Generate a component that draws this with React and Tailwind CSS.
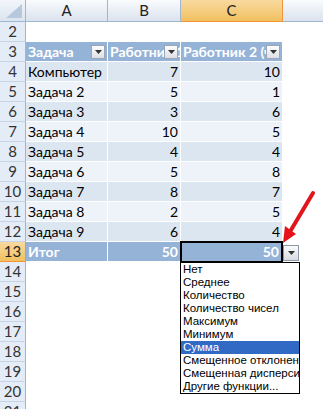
import React from "react";

const data = [
  ["Компьютер", 7, 10],
  ["Задача 2", 5, 1],
  ["Задача 3", 3, 6],
  ["Задача 4", 10, 5],
  ["Задача 5", 4, 4],
  ["Задача 6", 5, 8],
  ["Задача 7", 8, 7],
  ["Задача 8", 2, 5],
  ["Задача 9", 6, 4],
];

const menu = [
  "Нет",
  "Среднее",
  "Количество",
  "Количество чисел",
  "Максимум",
  "Минимум",
  "Сумма",
  "Смещенное отклонение",
  "Смещенная дисперсия",
  "Другие функции...",
];

function RowHead({ n, active }) {
  return (
    <div
      className={
        active
          ? "w-[26px] shrink-0 h-full flex items-center justify-center border-r border-b border-[#f29536] bg-linear-to-b from-[#f9d99f] to-[#f1c15f] text-[#222] text-[15px]"
          : "w-[26px] shrink-0 h-full flex items-center justify-center border-r border-b border-r-[#9eb6ce] border-b-[#c5d3e4] bg-[#e4ecf7] text-[#333] text-[15px]"
      }
    >
      {n}
    </div>
  );
}

function FilterBtn() {
  return (
    <div className="absolute right-[2px] top-[3px] w-[14px] h-[14px] border border-[#9aa6b5] bg-linear-to-b from-[#fdfdfd] to-[#dcdfe4] flex items-center justify-center">
      <svg width="7" height="4" viewBox="0 0 7 4">
        <polygon points="0,0 7,0 3.5,4" fill="#333" />
      </svg>
    </div>
  );
}

export default function App() {
  return (
    <div className="relative w-[323px] h-[409px] overflow-hidden bg-white font-[Lato,'Noto_Sans',sans-serif] text-[14px] leading-none">
      {/* column headers */}
      <div className="flex h-[22px] text-[15px]">
        <div className="relative w-[26px] shrink-0 h-full border-r border-b border-[#9eb6ce] bg-linear-to-b from-[#f3f6fb] to-[#dbe4ef]">
          <svg className="absolute left-0 top-0" width="25" height="21" viewBox="0 0 25 21">
            <polygon points="22,4 22,18 6,18" fill="#b7c8dc" />
          </svg>
        </div>
        <div className="w-[82px] shrink-0 h-full flex items-center justify-center border-r border-b border-[#9eb6ce] bg-linear-to-b from-[#f9fbfd] to-[#dbe3ee] text-[#222]">
          A
        </div>
        <div className="w-[73px] shrink-0 h-full flex items-center justify-center border-r border-b border-[#9eb6ce] bg-linear-to-b from-[#f9fbfd] to-[#dbe3ee] text-[#222]">
          B
        </div>
        <div className="w-[102px] shrink-0 h-full flex items-center justify-center border-r border-b border-[#f29536] bg-linear-to-b from-[#f9d99f] to-[#f1c15f] text-[#222]">
          C
        </div>
        <div className="flex-1 h-full border-b border-[#9eb6ce] bg-linear-to-b from-[#f9fbfd] to-[#dbe3ee]" />
      </div>

      {/* row 2 */}
      <div className="flex h-[20px]">
        <RowHead n={2} />
        <div className="flex-1" />
      </div>

      {/* row 3 table header */}
      <div className="flex h-[20px]">
        <RowHead n={3} />
        <div className="relative w-[82px] shrink-0 h-full bg-[#95b3d7] border-r border-b border-white flex items-center pl-[2px] text-white font-bold overflow-hidden whitespace-nowrap">
          Задача
          <FilterBtn />
        </div>
        <div className="relative w-[73px] shrink-0 h-full bg-[#95b3d7] border-r border-b border-white flex items-center pl-[2px] text-white font-bold overflow-hidden whitespace-nowrap">
          Работник 1
          <FilterBtn />
        </div>
        <div className="relative w-[102px] shrink-0 h-full bg-[#95b3d7] border-r border-b border-white flex items-center pl-[2px] text-white font-bold overflow-hidden whitespace-nowrap">
          Работник 2 (ч)
          <FilterBtn />
        </div>
        <div className="flex-1" />
      </div>

      {/* data rows */}
      {data.map((r, i) => {
        const dark = i % 2 === 0;
        const bg = dark ? "bg-[#dce6f1]" : "bg-[#eef3f9]";
        return (
          <div key={i} className="flex h-[20px]">
            <RowHead n={i + 4} />
            <div className={`w-[82px] shrink-0 h-full ${bg} border-r border-b border-white flex items-center pl-[2px] text-black whitespace-nowrap`}>
              {r[0]}
            </div>
            <div className={`w-[73px] shrink-0 h-full ${bg} border-r border-b border-white flex items-center justify-end pr-[2px] text-black`}>
              {r[1]}
            </div>
            <div className={`w-[102px] shrink-0 h-full ${bg} border-r border-b border-white flex items-center justify-end pr-[2px] text-black`}>
              {r[2]}
            </div>
            <div className="flex-1" />
          </div>
        );
      })}

      {/* row 13 total */}
      <div className="flex h-[20px]">
        <RowHead n={13} active />
        <div className="w-[82px] shrink-0 h-full bg-[#95b3d7] border-r border-b border-white flex items-center pl-[2px] text-white font-bold">
          Итог
        </div>
        <div className="w-[73px] shrink-0 h-full bg-[#95b3d7] border-r border-b border-white flex items-center justify-end pr-[2px] text-white font-bold">
          50
        </div>
        <div className="relative w-[102px] shrink-0 h-full bg-[#95b3d7] border-r border-b border-white flex items-center justify-end pr-[3px] text-white font-bold">
          50
          <div className="absolute -left-[1px] -top-[1px] w-[103px] h-[22px] border-2 border-black" />
        </div>
        <div className="flex-1" />
      </div>

      {/* rows 14-21 */}
      {[14, 15, 16, 17, 18, 19, 20, 21].map((n) => (
        <div key={n} className="flex h-[20px]">
          <RowHead n={n} />
          <div className="flex-1" />
        </div>
      ))}

      {/* total dropdown button */}
      <div className="absolute left-[283px] top-[245px] w-[16px] h-[16px] border border-[#8f9aa8] bg-linear-to-b from-[#fbfbfb] to-[#d8dbe0] flex items-center justify-center">
        <svg width="7" height="4" viewBox="0 0 7 4">
          <polygon points="0,0 7,0 3.5,4" fill="#333" />
        </svg>
      </div>

      {/* dropdown list */}
      <div className="absolute left-[180px] top-[262px] w-[120px] h-[132px] border border-black bg-white font-['Liberation_Sans',sans-serif] text-[11.5px] overflow-hidden">
        {menu.map((m) => (
          <div
            key={m}
            className={
              m === "Сумма"
                ? "h-[13px] leading-[13px] pl-[2px] whitespace-nowrap bg-[#316ac5] text-white"
                : "h-[13px] leading-[13px] pl-[2px] whitespace-nowrap text-black"
            }
          >
            {m}
          </div>
        ))}
      </div>

      {/* red arrow */}
      <svg className="absolute left-0 top-0 pointer-events-none" width="323" height="409" viewBox="0 0 323 409">
        <line x1="313" y1="193" x2="291" y2="230" stroke="#e3141b" strokeWidth="4" strokeLinecap="round" />
        <polygon points="283,243 285,226 296,234" fill="#e3141b" />
      </svg>
    </div>
  );
}
